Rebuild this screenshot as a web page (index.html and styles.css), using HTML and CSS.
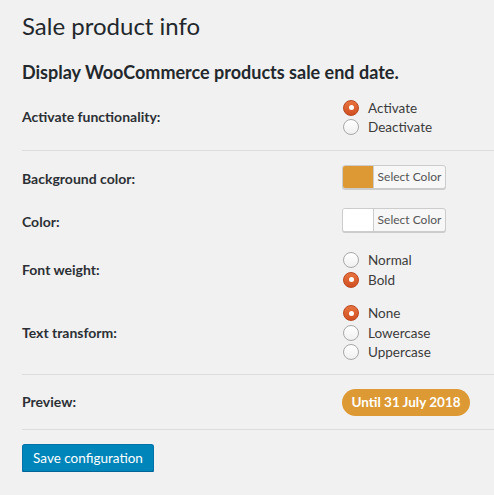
FILE: index.html
```html
<!DOCTYPE html>
<html>
<head>
<meta charset="utf-8">
<link rel="stylesheet" href="styles.css">
</head>
<body>
<div class="wrap">
  <h1 class="title">Sale product info</h1>
  <h2 class="subtitle">Display WooCommerce products sale end date.</h2>

  <div class="section s1">
    <div class="row">
      <div class="label">Activate functionality:</div>
      <div class="control radios">
        <label class="radio"><span class="dot checked"></span>Activate</label>
        <label class="radio"><span class="dot"></span>Deactivate</label>
      </div>
    </div>
  </div>

  <div class="section s2">
    <div class="row row-b">
      <div class="label label-low">Background color:</div>
      <div class="control">
        <div class="picker"><span class="swatch swatch-orange"></span><span class="picker-text">Select Color</span></div>
      </div>
    </div>
    <div class="row row-c">
      <div class="label label-low">Color:</div>
      <div class="control">
        <div class="picker"><span class="swatch swatch-white"></span><span class="picker-text">Select Color</span></div>
      </div>
    </div>
    <div class="row row-d">
      <div class="label">Font weight:</div>
      <div class="control radios">
        <label class="radio"><span class="dot"></span>Normal</label>
        <label class="radio"><span class="dot checked"></span>Bold</label>
      </div>
    </div>
    <div class="row row-e">
      <div class="label">Text transform:</div>
      <div class="control radios">
        <label class="radio"><span class="dot checked"></span>None</label>
        <label class="radio"><span class="dot"></span>Lowercase</label>
        <label class="radio"><span class="dot"></span>Uppercase</label>
      </div>
    </div>
  </div>

  <div class="section s3">
    <div class="row">
      <div class="label">Preview:</div>
      <div class="control">
        <span class="badge">Until 31 July 2018</span>
      </div>
    </div>
  </div>

  <div class="actions">
    <button class="btn">Save configuration</button>
  </div>
</div>
</body>
</html>
```

FILE: styles.css
```css
html, body {
  margin: 0;
  padding: 0;
  background: #f1f1f1;
}
body {
  font-family: "Lato", "Open Sans", sans-serif;
  color: #444;
  overflow: hidden;
}
.wrap {
  padding-left: 22px;
}
.title {
  margin: 0;
  padding-top: 11px;
  font-size: 24px;
  line-height: 30px;
  font-weight: 400;
  color: #23282d;
}
.subtitle {
  margin: 20px 0 0;
  font-size: 18px;
  line-height: 22px;
  font-weight: 700;
  color: #23282d;
}
.section {
  border-bottom: 1px solid #dcdcdc;
}
.s1 {
  padding: 15px 0 13px;
}
.s2 {
  padding: 14px 0 12px;
}
.s3 {
  padding: 14px 0 13px;
}
.row {
  display: flex;
  align-items: center;
}
.row-c { margin-top: 19px; }
.row-d { margin-top: 19px; }
.row-e { margin-top: 14px; }
.label {
  width: 320px;
  flex: none;
  font-size: 14px;
  font-weight: 700;
  color: #2c3035;
  line-height: 18px;
}
.label-low {
  padding-top: 4px;
}
.radios {
  display: flex;
  flex-direction: column;
}
.radio {
  display: flex;
  align-items: center;
  height: 19.4px;
  font-size: 13.5px;
  color: #3c3c3c;
}
.dot {
  width: 14px;
  height: 14px;
  border-radius: 50%;
  border: 1px solid #a8a8a8;
  background: linear-gradient(#ffffff, #f0f0f0);
  margin: 0 9px 0 1px;
  position: relative;
  flex: none;
}
.dot.checked {
  border-color: #b8461f;
  background: linear-gradient(#e8743f, #d14f22);
}
.dot.checked::after {
  content: "";
  position: absolute;
  left: 4.5px;
  top: 4.5px;
  width: 5px;
  height: 5px;
  border-radius: 50%;
  background: #fff;
}
.picker {
  display: flex;
  height: 22px;
  width: 102px;
  border: 1px solid #cccccc;
  border-radius: 3px;
  background: #f7f7f7;
  box-shadow: 0 1px 0 #cccccc;
  overflow: hidden;
}
.swatch {
  width: 30px;
  flex: none;
  border-right: 1px solid #cccccc;
}
.swatch-orange { background: #dd9933; }
.swatch-white { background: #ffffff; }
.picker-text {
  flex: 1;
  text-align: center;
  font-size: 12px;
  line-height: 22px;
  color: #555;
}
.badge {
  display: inline-block;
  width: 128px;
  height: 27px;
  line-height: 27px;
  border-radius: 14px;
  background: #dd9933;
  color: #fff;
  font-weight: 700;
  font-size: 13.5px;
  text-align: center;
}
.actions {
  padding-top: 14px;
}
.btn {
  font-family: inherit;
  font-size: 13.5px;
  color: #fff;
  background: #0085ba;
  border: 1px solid #0073aa;
  border-bottom-color: #006799;
  box-shadow: 0 1px 0 #006799;
  border-radius: 3px;
  height: 28px;
  width: 132px;
  padding: 0;
  cursor: pointer;
}
```
